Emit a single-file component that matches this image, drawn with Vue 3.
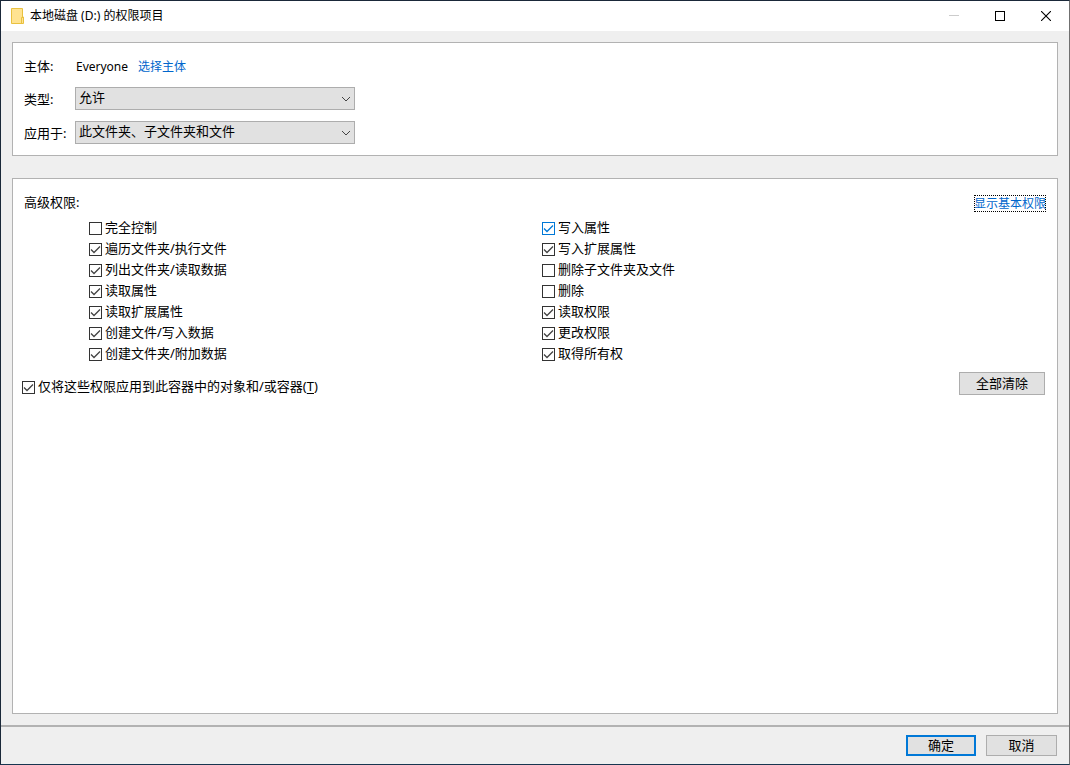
<script setup>
import { ref } from 'vue'

const type = ref('允许')
const scope = ref('此文件夹、子文件夹和文件')
const containerOnly = ref(true)

const columns = ref([
  [
    { id: 'full', label: '完全控制', on: false },
    { id: 'traverse', label: '遍历文件夹/执行文件', on: true },
    { id: 'list', label: '列出文件夹/读取数据', on: true },
    { id: 'read-attr', label: '读取属性', on: true },
    { id: 'read-ext', label: '读取扩展属性', on: true },
    { id: 'create-file', label: '创建文件/写入数据', on: true },
    { id: 'create-folder', label: '创建文件夹/附加数据', on: true },
  ],
  [
    { id: 'write-attr', label: '写入属性', on: true, hot: true },
    { id: 'write-ext', label: '写入扩展属性', on: true },
    { id: 'delete-sub', label: '删除子文件夹及文件', on: false },
    { id: 'delete', label: '删除', on: false },
    { id: 'read-perm', label: '读取权限', on: true },
    { id: 'change-perm', label: '更改权限', on: true },
    { id: 'own', label: '取得所有权', on: true },
  ],
])

function clearAll() {
  columns.value.forEach((col) => col.forEach((item) => (item.on = false)))
}
</script>

<template>
  <div class="window">
    <header class="titlebar">
      <svg class="folder" width="14" height="16" viewBox="0 0 14 16">
        <path d="M.5.5h11v8.500h1v6.500H.5z" fill="#ffe391" stroke="#e9c13f" />
        <path d="M10.500 15V9.500h2" fill="none" stroke="#e9c13f" />
      </svg>
      <h1>本地磁盘 (D:) 的权限项目</h1>
      <div class="caption">
        <button type="button" aria-label="最小化" disabled>
          <svg width="10" height="10"><path d="M0 4.500h10" stroke="#ccc" /></svg>
        </button>
        <button type="button" aria-label="最大化">
          <svg width="10" height="10"><rect x=".5" y=".5" width="9" height="9" fill="none" stroke="#000" /></svg>
        </button>
        <button type="button" aria-label="关闭">
          <svg width="10" height="10"><path d="M0 0l10 10M10 0L0 10" stroke="#000" stroke-width="1.100" /></svg>
        </button>
      </div>
    </header>

    <main>
      <section class="panel subject">
        <span class="name">主体:</span>
        <div class="principal"><span>Everyone</span><a href="#">选择主体</a></div>
        <label class="name" for="type">类型:</label>
        <div class="combo">
          <select id="type" v-model="type"><option>允许</option></select>
          <svg width="10" height="6" viewBox="0 0 10 6"><path d="M1 1l4 4 4-4" /></svg>
        </div>
        <label class="name" for="scope">应用于:</label>
        <div class="combo">
          <select id="scope" v-model="scope"><option>此文件夹、子文件夹和文件</option></select>
          <svg width="10" height="6" viewBox="0 0 10 6"><path d="M1 1l4 4 4-4" /></svg>
        </div>
      </section>

      <section class="panel permissions">
        <div class="heading">
          <h2>高级权限:</h2>
          <a class="focused" href="#">显示基本权限</a>
        </div>
        <div class="columns">
          <div v-for="(col, i) in columns" :key="i">
            <div v-for="item in col" :key="item.id" class="check" :class="{ hot: item.hot }">
              <span class="box">
                <input :id="item.id" v-model="item.on" type="checkbox" />
                <svg v-if="item.on" width="13" height="13"><path d="M2 6.500l3 3 6-6" /></svg>
              </span>
              <label :for="item.id">{{ item.label }}</label>
            </div>
          </div>
        </div>
        <div class="bottom">
          <div class="check">
            <span class="box">
              <input id="container" v-model="containerOnly" type="checkbox" />
              <svg v-if="containerOnly" width="13" height="13"><path d="M2 6.500l3 3 6-6" /></svg>
            </span>
            <label for="container">仅将这些权限应用到此容器中的对象和/或容器(<u>T</u>)</label>
          </div>
          <button class="btn clear" type="button" @click="clearAll">全部清除</button>
        </div>
      </section>
    </main>

    <footer>
      <button class="btn primary" type="button">确定</button>
      <button class="btn" type="button">取消</button>
    </footer>
  </div>
</template>

<style>
body {
  margin: 0;
}
</style>

<style scoped>
* {
  box-sizing: border-box;
}
.window {
  display: flex;
  flex-direction: column;
  min-height: 100vh;
  border: 1px solid #1a2839;
  border-right-color: #707070;
  border-bottom-color: #173650;
  background: #efefef;
  color: #000;
  font: 13px/20px "Noto Sans", "Noto Sans CJK SC", sans-serif;
}
button,
select {
  font: inherit;
  color: inherit;
}
.titlebar {
  display: flex;
  align-items: center;
  height: 30px;
  padding-left: 10px;
  background: #fff;
}
h1 {
  flex: 1;
  margin: 0 0 0 5px;
  font-size: 12px;
  font-weight: 400;
}
.caption {
  display: flex;
}
.caption button {
  display: flex;
  align-items: center;
  justify-content: center;
  width: 46px;
  height: 30px;
  padding: 0;
  border: 0;
  background: none;
}
main {
  flex: 1;
  display: flex;
  flex-direction: column;
  gap: 22px;
  padding: 11px;
}
.panel {
  border: 1px solid #b2b2b2;
  background: #fff;
}
.subject {
  display: grid;
  grid-template-columns: 51px 280px;
  grid-template-rows: 20px 23px 23px;
  row-gap: 11px;
  align-items: center;
  padding: 13px 11px 11px;
}
.name {
  white-space: nowrap;
}
.principal {
  display: flex;
  gap: 10px;
  padding: 2px 0 0 1px;
  font-size: 12px;
}
a {
  color: #0066cc;
  font-size: 12px;
  text-decoration: none;
}
.combo {
  position: relative;
  height: 23px;
}
.combo select {
  width: 100%;
  height: 23px;
  padding: 0 20px 2px 3px;
  border: 1px solid #adadad;
  border-radius: 0;
  background: #e1e1e1;
  line-height: 19px;
  appearance: none;
}
.combo svg {
  position: absolute;
  top: 9px;
  right: 4px;
  fill: none;
  stroke: #444;
  pointer-events: none;
}
.permissions {
  flex: 1;
}
.heading {
  display: flex;
  justify-content: space-between;
  align-items: flex-start;
  padding: 13px 11px 0;
}
h2 {
  margin: 0;
  font-size: 13px;
  font-weight: 400;
}
.focused {
  margin-top: 3px;
  line-height: 17px;
  outline: 1px dotted #000;
  outline-offset: -1px;
}
.columns {
  display: grid;
  grid-template-columns: 1fr 1fr;
  padding: 5px 62px 0 76px;
}
.check {
  display: flex;
  align-items: center;
  gap: 3px;
  height: 21px;
}
.check label {
  padding-bottom: 2px;
}
.box {
  position: relative;
  width: 13px;
  height: 13px;
  margin-top: 2px;
}
.box input {
  display: block;
  width: 13px;
  height: 13px;
  margin: 0;
  border: 1px solid #333;
  background: #fff;
  appearance: none;
}
.box svg {
  position: absolute;
  inset: 0;
  fill: none;
  stroke: #444;
  stroke-width: 1.300;
  pointer-events: none;
}
.box input,
.box svg {
  border-radius: 0;
}
.hot .box input {
  border-color: #0078d7;
}
.hot .box svg {
  stroke: #0078d7;
}
u {
  text-underline-offset: 2px;
}
.bottom {
  display: flex;
  align-items: flex-start;
  justify-content: space-between;
  padding: 8px 12px 0 9px;
}
.bottom .check {
  margin-top: 4px;
}
.btn {
  width: 71px;
  height: 21px;
  padding: 0;
  border: 1px solid #adadad;
  background: #e1e1e1;
  line-height: 17px;
}
.clear {
  width: 86px;
  height: 23px;
}
.primary {
  width: 70px;
  border: 2px solid #0078d7;
}
footer {
  display: flex;
  justify-content: flex-end;
  gap: 10px;
  padding: 8px 12px;
  border-top: 2px solid #b2b2b2;
}
</style>
